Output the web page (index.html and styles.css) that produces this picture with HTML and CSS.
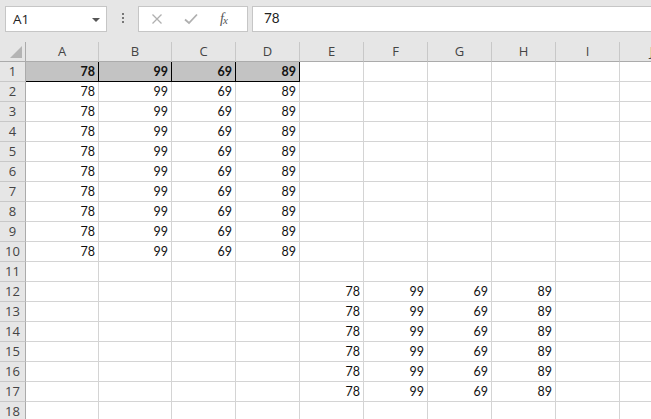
FILE: index.html
```html
<!DOCTYPE html>
<html>
<head>
  <title>Sheet1</title>
  <meta charset="UTF-8">
  <link rel="stylesheet" href="styles.css">
</head>
<body>
  <div class="toolbar">
    <div class="name-box">
      <span>A1</span>
      <span class="drop"></span>
    </div>
    <div class="grip">
      <span></span><span></span><span></span>
    </div>
    <div class="fx-box">
      <svg class="ico" width="12" height="12" viewBox="0 0 12 12">
        <path d="M1.5 1.5 L10.5 10.5 M10.5 1.5 L1.5 10.5" stroke="#b0b0b0" stroke-width="1.3" fill="none"/>
      </svg>
      <svg class="ico" width="14" height="12" viewBox="0 0 14 12">
        <path d="M1 6.5 L5 10 L13 1.5" stroke="#b0b0b0" stroke-width="1.8" fill="none"/>
      </svg>
      <span class="fx"><i>f</i><i class="x">x</i></span>
    </div>
    <div class="formula">78</div>
  </div>

  <div class="sheet" id="sheet"></div>

  <script>
    var cols = ["A", "B", "C", "D", "E", "F", "G", "H", "I", "J"];
    var vals = ["78", "99", "69", "89"];
    var sheet = document.getElementById("sheet");
    var html = '<div class="corner"><span class="tri"></span></div>';

    for (var c = 0; c < cols.length; c++) {
      html += '<div class="col-head">' + cols[c] + '</div>';
    }

    for (var r = 1; r <= 18; r++) {
      html += '<div class="row-head">' + r + '</div>';
      for (var c = 0; c < cols.length; c++) {
        var text = "";
        var cls = "cell";
        // первая таблица: A1:D10
        if (r <= 10 && c < 4) {
          text = vals[c];
        }
        // вторая таблица: E12:H17
        if (r >= 12 && r <= 17 && c >= 4 && c < 8) {
          text = vals[c - 4];
        }
        if (r == 1 && c < 4) {
          cls += " sel";
        }
        html += '<div class="' + cls + '">' + text + '</div>';
      }
    }
    sheet.innerHTML = html;
  </script>
</body>
</html>
```

FILE: styles.css
```css
* {
  box-sizing: border-box;
}

body {
  margin: 0;
  width: 651px;
  height: 419px;
  overflow: hidden;
  background: #ffffff;
  font-family: "Open Sans", "Liberation Sans", sans-serif;
}

.toolbar {
  display: flex;
  align-items: flex-start;
  height: 42px;
  padding: 6px 0 0 5px;
  background: #e6e6e6;
}

.name-box {
  display: flex;
  align-items: center;
  justify-content: space-between;
  width: 102px;
  height: 26px;
  padding: 0 6px 0 7px;
  background: #fff;
  border: 1px solid #c6c6c6;
  font-size: 13.5px;
  color: #222;
}

.drop {
  width: 0;
  height: 0;
  border-left: 4px solid transparent;
  border-right: 4px solid transparent;
  border-top: 4px solid #555;
  margin-top: 1px;
}

.grip {
  display: flex;
  flex-direction: column;
  gap: 2px;
  width: 31px;
  padding-top: 7px;
  align-items: center;
}

.grip span {
  width: 2px;
  height: 2px;
  background: #777;
}

.fx-box {
  display: flex;
  align-items: center;
  width: 110px;
  height: 26px;
  padding-left: 12px;
  background: #fff;
  border: 1px solid #c6c6c6;
}

.ico {
  display: block;
}

.ico + .ico {
  margin-left: 21px;
}

.fx {
  margin-left: 22px;
  font-family: "Liberation Serif", serif;
  font-size: 14px;
  color: #555;
  letter-spacing: -1px;
}

.fx .x {
  font-size: 11px;
  position: relative;
  top: 1px;
}

.formula {
  flex: 1;
  height: 26px;
  margin-left: 4px;
  padding: 3px 0 0 11px;
  background: #fff;
  border: 1px solid #c6c6c6;
  border-right: none;
  font-family: "Lato", sans-serif;
  font-size: 13.5px;
  color: #222;
}

.sheet {
  display: grid;
  grid-template-columns: 26px 73px 73px 64px 64px 64px 64px 64px 64px 64px 64px;
  grid-auto-rows: 20px;
}

.corner,
.col-head,
.row-head {
  background: #e6e6e6;
  color: #444;
  font-size: 13px;
}

.corner {
  position: relative;
  border-right: 1px solid #ababab;
  border-bottom: 1px solid #ababab;
}

.tri {
  position: absolute;
  right: 3px;
  bottom: 3px;
  width: 0;
  height: 0;
  border-left: 12px solid transparent;
  border-bottom: 12px solid #b4b4b4;
}

.col-head {
  text-align: center;
  line-height: 19px;
  border-right: 1px solid #c8c8c8;
  border-bottom: 1px solid #ababab;
}

.row-head {
  text-align: center;
  line-height: 19px;
  border-right: 1px solid #ababab;
  border-bottom: 1px solid #c8c8c8;
}

.cell {
  border-right: 1px solid #d4d4d4;
  border-bottom: 1px solid #d4d4d4;
  text-align: right;
  padding-right: 3px;
  line-height: 20px;
  font-family: "Lato", sans-serif;
  font-size: 12.5px;
  color: #111;
}

.cell.sel {
  background: #c3c3c3;
  font-weight: bold;
  border-right-color: #000;
  border-bottom-color: #000;
}
```
